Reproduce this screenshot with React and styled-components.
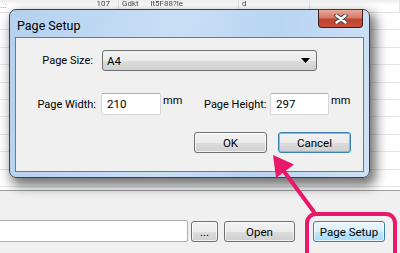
import React from 'react';
import styled, { createGlobalStyle } from 'styled-components';

const GlobalStyle = createGlobalStyle`
  html, body {
    margin: 0;
    padding: 0;
    background: #ffffff;
  }
  body {
    font-family: Roboto, "Noto Sans", sans-serif;
    font-size: 11px;
    color: #000;
  }
`;

const sheetRows = Array.from({ length: 11 });

const App = () => {
    return (
        <Screen>
            <GlobalStyle />
            <Sheet>
                <HeaderRow>
                    <Cell $w={119} $right>
                        <Dots>..:</Dots>
                        <Faded>107</Faded>
                    </Cell>
                    <Cell $w={120}>
                        <Faded>Gdkt &nbsp; &nbsp; &nbsp;lt5F88?le</Faded>
                    </Cell>
                    <Cell $w={71}>
                        <Faded>d</Faded>
                    </Cell>
                    <Cell $w={90} />
                </HeaderRow>
                {sheetRows.map((_, i) => (
                    <SheetRow key={i} />
                ))}
            </Sheet>

            <BottomPanel>
                <PathInput />
                <Button $w={27}>...</Button>
                <Button $w={71} $ml={6}>Open</Button>
                <Button $w={72} $ml={18} $hot>Page Setup</Button>
            </BottomPanel>

            <Dialog>
                <TitleBar>
                    <Title>Page Setup</Title>
                    <CloseButton>
                        <svg width="14" height="10" viewBox="0 0 14 10">
                            <path d="M2.5 1.5 L11.5 8.5 M11.5 1.5 L2.5 8.5" stroke="#4a4a4a" strokeWidth="4.4" strokeLinecap="round" />
                            <path d="M2.5 1.5 L11.5 8.5 M11.5 1.5 L2.5 8.5" stroke="#ffffff" strokeWidth="2.4" strokeLinecap="round" />
                        </svg>
                    </CloseButton>
                </TitleBar>
                <Client>
                    <FormRow>
                        <Label $w={57}>Page Size:</Label>
                        <Select>
                            <span>A4</span>
                            <svg width="9" height="5" viewBox="0 0 9 5">
                                <path d="M0 0 H9 L4.5 5 Z" fill="#000" />
                            </svg>
                        </Select>
                    </FormRow>
                    <FormRow $mt={22}>
                        <Label $w={60}>Page Width:</Label>
                        <TextInput $w={60}>210</TextInput>
                        <Unit $w={41}>mm</Unit>
                        <Label $w={61}>Page Height:</Label>
                        <TextInput $w={59}>297</TextInput>
                        <Unit $w={20}>mm</Unit>
                    </FormRow>
                    <ButtonRow>
                        <Button $w={73}>OK</Button>
                        <Button $w={73} $ml={11} $focus>Cancel</Button>
                    </ButtonRow>
                </Client>
            </Dialog>

            <Overlay width="400" height="253" viewBox="0 0 400 253">
                <rect x="307" y="214" width="88" height="52" rx="9" fill="none" stroke="#e8196a" strokeWidth="4" />
                <line x1="314" y1="212" x2="283" y2="170" stroke="#e8196a" strokeWidth="4" strokeLinecap="round" />
                <polygon points="273,155 294,164.5 276,178" fill="#e8196a" />
            </Overlay>
        </Screen>
    );
};

const Screen = styled.div`
  position: relative;
  width: 400px;
  height: 253px;
  overflow: hidden;
  background: #ffffff;
  display: flex;
  flex-direction: column;
`;

const Sheet = styled.div`
  height: 190px;
  display: flex;
  flex-direction: column;
  overflow: hidden;
`;

const HeaderRow = styled.div`
  height: 12px;
  flex-shrink: 0;
  display: flex;
  border-bottom: 1px solid #e4e4e4;
  background: linear-gradient(#ececec 0%, #ffffff 40%);
`;

const Cell = styled.div`
  width: ${p => p.$w}px;
  height: 100%;
  flex-shrink: 0;
  box-sizing: border-box;
  border-right: 1px solid #e4e4e4;
  display: flex;
  align-items: flex-start;
  justify-content: ${p => (p.$right ? 'space-between' : 'flex-start')};
  padding-right: ${p => (p.$right ? 8 : 0)}px;
  overflow: hidden;
`;

const Faded = styled.span`
  font-size: 8px;
  line-height: 8px;
  color: #4a4a4a;
  filter: blur(0.5px);
  white-space: nowrap;
  padding-left: 3px;
  margin-top: 0;
`;

const Dots = styled.span`
  color: #3b6fd0;
  font-size: 8px;
  line-height: 8px;
  margin-top: 2px;
`;

const SheetRow = styled.div`
  height: 16.4px;
  flex-shrink: 0;
  border-bottom: 1px solid #e6e6e6;
`;

const BottomPanel = styled.div`
  flex: 1;
  border-top: 1px solid #a0a0a0;
  background: #f0f0f0;
  display: flex;
  align-items: flex-start;
  padding-top: 30px;
`;

const PathInput = styled.div`
  width: 190px;
  height: 20px;
  margin-left: -4px;
  margin-right: 3px;
  margin-top: -1px;
  background: #fff;
  border: 1px solid #abadb3;
  border-radius: 2px;
`;

const Button = styled.div`
  box-sizing: border-box;
  width: ${p => p.$w}px;
  height: 21px;
  margin-left: ${p => p.$ml || 0}px;
  display: flex;
  align-items: center;
  justify-content: center;
  font-size: 11.5px;
  color: #000;
  border-radius: 3px;
  border: 1px solid ${p => (p.$focus || p.$hot ? '#3c7fb1' : '#707070')};
  background: ${p => p.$hot
        ? 'linear-gradient(#eaf6fd 0%, #d9f0fc 50%, #bee6fd 51%, #a7d9f5 100%)'
        : 'linear-gradient(#f2f2f2 0%, #ebebeb 50%, #dddddd 51%, #cfcfcf 100%)'};
  box-shadow: inset 0 0 0 1px ${p => (p.$focus ? '#48d5fb' : 'rgba(255,255,255,0.7)')};
`;

const Dialog = styled.div`
  position: absolute;
  left: 9px;
  top: 9px;
  width: 361px;
  height: 169px;
  box-sizing: border-box;
  border: 1px solid #3a3f47;
  border-radius: 7px;
  background: linear-gradient(100deg, #b5d1ef 0%, #c9dff5 45%, #b9d4f1 70%, #cfe3f7 100%);
  box-shadow: 4px 6px 12px 2px rgba(0, 0, 0, 0.55);
  display: flex;
  flex-direction: column;
`;

const TitleBar = styled.div`
  height: 27px;
  display: flex;
  align-items: flex-start;
  justify-content: space-between;
  padding-left: 7px;
  padding-right: 6px;
`;

const Title = styled.div`
  font-size: 12.5px;
  line-height: 13px;
  margin-top: 9px;
  color: #000;
`;

const CloseButton = styled.div`
  width: 45px;
  height: 18px;
  box-sizing: border-box;
  border: 1px solid #3f1d18;
  border-top: none;
  border-radius: 0 0 4px 4px;
  background: linear-gradient(#e9a99a 0%, #d47a69 45%, #c4412d 55%, #c6513c 100%);
  display: flex;
  align-items: center;
  justify-content: center;
`;

const Client = styled.div`
  flex: 1;
  margin: 0 5px 5px 5px;
  border: 1px solid #6e7a89;
  background: #f0f0f0;
  padding: 12px 0 0 20px;
  display: flex;
  flex-direction: column;
`;

const FormRow = styled.div`
  display: flex;
  align-items: center;
  margin-top: ${p => p.$mt || 0}px;
`;

const Label = styled.div`
  width: ${p => p.$w}px;
  text-align: right;
  white-space: nowrap;
  font-size: 11px;
  margin-right: 5px;
`;

const Select = styled.div`
  box-sizing: border-box;
  width: 215px;
  height: 21px;
  margin-left: 4px;
  border: 1px solid #707070;
  border-radius: 3px;
  background: linear-gradient(#f2f2f2 0%, #ebebeb 50%, #dddddd 51%, #cfcfcf 100%);
  display: flex;
  align-items: center;
  justify-content: space-between;
  padding: 0 6px 0 4px;
  font-size: 11.5px;
`;

const TextInput = styled.div`
  box-sizing: border-box;
  width: ${p => p.$w}px;
  height: 22px;
  background: #fff;
  border: 1px solid #d5d5d5;
  border-top-color: #abadb3;
  border-radius: 2px;
  display: flex;
  align-items: center;
  padding-left: 5px;
  font-size: 11.5px;
`;

const Unit = styled.div`
  width: ${p => p.$w}px;
  padding-left: 2px;
  font-size: 11px;
  align-self: flex-start;
  margin-top: 1px;
`;

const ButtonRow = styled.div`
  display: flex;
  margin-top: 17px;
  margin-left: 158px;
`;

const Overlay = styled.svg`
  position: absolute;
  left: 0;
  top: 0;
  pointer-events: none;
`;

export default App;
